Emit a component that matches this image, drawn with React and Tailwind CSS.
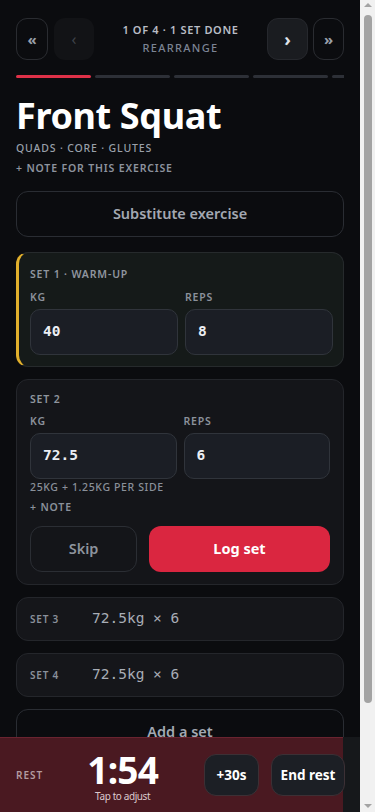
import React from "react";

const sans = { fontFamily: '"Noto Sans", "Open Sans", sans-serif' };

function NavButton({ children, className }) {
  return (
    <button className={`flex h-[42px] items-center justify-center rounded-[11px] ${className}`}>
      {children}
    </button>
  );
}

function Field({ label, value }) {
  return (
    <div className="flex flex-1 flex-col">
      <span className="mb-[3px] text-[10.5px] font-semibold tracking-[0.08em] text-[#8b919b]">{label}</span>
      <div className="flex h-[46px] items-center rounded-[10px] border border-[#30343b] bg-[#1b1e25] px-3 font-['DejaVu_Sans_Mono',monospace] text-[14.5px] font-bold text-[#eceef3]">
        {value}
      </div>
    </div>
  );
}

function DoneRow({ n }) {
  return (
    <div className="flex h-[44px] items-center rounded-[12px] border border-[#24262b] bg-[#15161a] px-[13px]">
      <span className="w-[62px] text-[10px] font-semibold tracking-[0.08em] text-[#8a909a]">SET {n}</span>
      <span className="font-['DejaVu_Sans_Mono',monospace] text-[14.5px] text-[#a8adb6]">72.5kg × 6</span>
    </div>
  );
}

// fake classic scrollbar, as in the reference capture
function ScrollBar() {
  return (
    <div className="fixed right-0 top-0 flex h-screen w-[15px] flex-col items-center bg-[#f1f1f1]">
      <span className="mt-[3px] h-0 w-0 border-x-[4px] border-b-[4px] border-x-transparent border-b-[#a3a3a3]" />
      <div className="mt-[8px] h-[688px] w-[8px] rounded-full bg-[#a3a3a3]" />
      <span className="mb-[4px] mt-auto h-0 w-0 border-x-[4px] border-t-[4px] border-x-transparent border-t-[#a3a3a3]" />
    </div>
  );
}

export default function App() {
  return (
    <div className="min-h-screen bg-[#f1f1f1]">
      <div className="min-h-screen w-[360px] bg-[#0b0c0f] pb-[160px]" style={sans}>
        {/* Header nav */}
        <div className="flex items-center px-4 pt-[18px]">
          <div className="flex gap-[6px]">
            <NavButton className="w-[32px] border border-[#2a2c31] text-[15px] font-bold text-[#9aa0aa]">«</NavButton>
            <NavButton className="w-[40px] bg-[#121316] text-[16px] text-[#3f434a]">‹</NavButton>
          </div>
          <div className="flex flex-1 flex-col items-center">
            <span className="text-[11px] font-semibold tracking-[0.06em] text-[#b9bdc5]">1 OF 4 · 1 SET DONE</span>
            <span className="mt-[1px] text-[11px] font-medium tracking-[0.12em] text-[#7c8494]">REARRANGE</span>
          </div>
          <div className="flex gap-[5px]">
            <NavButton className="w-[41px] border border-[#26282d] bg-[#1a1c20] text-[18px] font-bold text-[#dfe3ea]">›</NavButton>
            <NavButton className="w-[31px] border border-[#2a2c31] text-[15px] font-bold text-[#9aa0aa]">»</NavButton>
          </div>
        </div>

        {/* Progress */}
        <div className="mx-4 mt-[15px] flex h-[3px] gap-[4px] overflow-hidden">
          <div className="w-[75px] shrink-0 rounded-full bg-[#df3148]" />
          <div className="w-[75px] shrink-0 rounded-full bg-[#2d3037]" />
          <div className="w-[75px] shrink-0 rounded-full bg-[#2d3037]" />
          <div className="w-[75px] shrink-0 rounded-full bg-[#2d3037]" />
          <div className="w-[75px] shrink-0 rounded-full bg-[#2d3037]" />
        </div>

        <div className="px-4">
          <h1 className="mt-[18px] text-[36px] font-bold leading-[40px] tracking-[-0.01em] text-white">Front Squat</h1>
          <p className="mt-[5px] text-[10.5px] font-medium tracking-[0.08em] text-[#99a0aa]">QUADS · CORE · GLUTES</p>
          <p className="mt-[4px] text-[10.5px] font-semibold tracking-[0.08em] text-[#8d939e]">+ NOTE FOR THIS EXERCISE</p>

          <button className="mt-[14px] h-[46px] w-full rounded-[12px] border border-[#2a2d33] text-[14.5px] font-semibold text-[#a3a8b2]">
            Substitute exercise
          </button>

          {/* Set 1 warm-up */}
          <div className="mt-[15px] rounded-[12px] border border-[#262a2c] border-l-[3px] border-l-[#e2b02c] bg-[#151a19] pb-[11px] pl-[11px] pr-[10px] pt-[14px]">
            <p className="text-[10.5px] font-semibold tracking-[0.08em] text-[#8f959e]">SET 1 · WARM-UP</p>
            <div className="mt-[8px] flex gap-[7px]">
              <Field label="KG" value="40" />
              <Field label="REPS" value="8" />
            </div>
          </div>

          {/* Set 2 active */}
          <div className="mt-[12px] rounded-[12px] border border-[#24262b] bg-[#141519] px-[13px] pb-[12px] pt-[12px]">
            <p className="text-[10.5px] font-semibold tracking-[0.08em] text-[#8f959e]">SET 2</p>
            <div className="mt-[6px] flex gap-[7px]">
              <Field label="KG" value="72.5" />
              <Field label="REPS" value="6" />
            </div>
            <p className="mt-[1px] text-[10.5px] font-medium tracking-[0.06em] text-[#8a909a]">25KG + 1.25KG PER SIDE</p>
            <p className="mt-[5px] text-[10.5px] font-semibold tracking-[0.08em] text-[#8a909a]">+ NOTE</p>
            <div className="mt-[10px] flex gap-[12px]">
              <button className="h-[46px] w-[107px] rounded-[12px] border border-[#2b2e34] text-[14.5px] font-semibold text-[#8d939d]">Skip</button>
              <button className="h-[46px] flex-1 rounded-[12px] bg-[#da2640] text-[14.5px] font-bold text-white">Log set</button>
            </div>
          </div>

          <div className="mt-[12px] flex flex-col gap-[12px]">
            <DoneRow n={3} />
            <DoneRow n={4} />
          </div>

          <button className="mt-[12px] h-[46px] w-full rounded-[12px] border border-[#2a2d33] text-[14.5px] font-semibold text-[#a3a8b2]">
            Add a set
          </button>
        </div>

        {/* Rest timer */}
        <div className="fixed bottom-0 left-0 h-[75px] w-[360px] bg-[#16181b]">
          <div className="flex h-full w-[343px] items-center border-t border-[#6a2430] bg-[#4a1921] pl-4">
            <span className="text-[10px] font-semibold tracking-[0.1em] text-[#b39ba0]">REST</span>
            <div className="ml-[44px] mt-[4px] flex flex-col items-center">
              <span className="text-[37px] font-bold leading-[36px] tracking-[-0.02em] text-white">1:54</span>
              <span className="mt-[2px] text-[10px] leading-[12px] tracking-[-0.04em] text-[#dcc9cd]">Tap to adjust</span>
            </div>
            <button className="ml-auto h-[42px] w-[55px] rounded-[12px] border border-[#3c3035] bg-[#1c1f25] text-[13.5px] font-bold text-white">+30s</button>
            <button className="ml-[12px] mr-[-2px] h-[42px] w-[74px] rounded-[12px] border border-[#3c3035] bg-[#1c1f25] text-[13.5px] font-bold text-white">End rest</button>
          </div>
        </div>
      </div>
      <ScrollBar />
    </div>
  );
}
